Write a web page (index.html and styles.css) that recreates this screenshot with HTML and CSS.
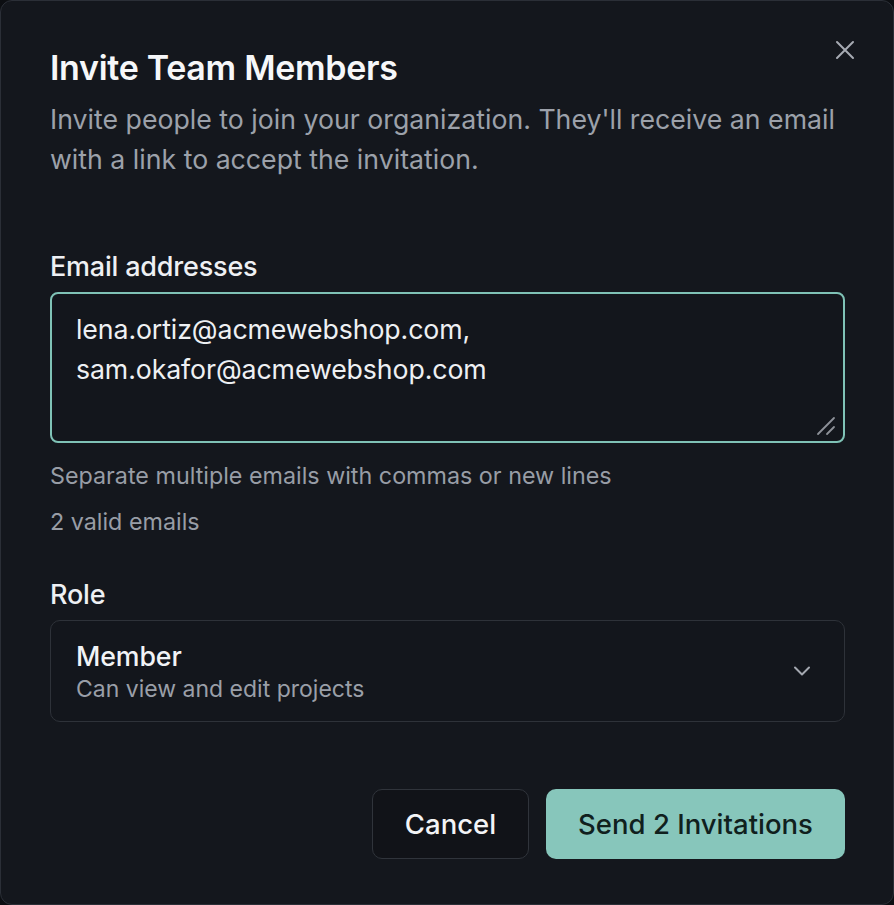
FILE: index.html
```html
<!DOCTYPE html>
<html lang="en">
<head>
<meta charset="utf-8">
<title>Invite Team Members</title>
<link rel="stylesheet" href="styles.css">
</head>
<body>
<div class="dialog" role="dialog" aria-labelledby="dlg-title">
  <button class="close" aria-label="Close">
    <svg width="20" height="20" viewBox="0 0 20 20" fill="none" stroke="currentColor" stroke-width="2" stroke-linecap="round"><path d="M2 2L18 18M18 2L2 18"/></svg>
  </button>
  <header class="head">
    <h2 id="dlg-title" class="title">Invite Team Members</h2>
    <p class="subtitle">Invite people to join your organization. They'll receive an email with a link to accept the invitation.</p>
  </header>

  <div class="field emails">
    <label class="label" for="emails">Email addresses</label>
    <div class="textarea-wrap">
      <textarea id="emails" class="textarea">lena.ortiz@acmewebshop.com,
sam.okafor@acmewebshop.com</textarea>
      <svg class="grip" width="20" height="20" viewBox="0 0 20 20" fill="none" stroke="currentColor" stroke-width="1.8" stroke-linecap="round"><path d="M2 18L18 2M11 18L18 11"/></svg>
    </div>
    <p class="hint first">Separate multiple emails with commas or new lines</p>
    <p class="hint count">2 valid emails</p>
  </div>

  <div class="field role">
    <span class="label">Role</span>
    <div class="select">
      <div class="select-text">
        <span class="select-value">Member</span>
        <span class="select-desc">Can view and edit projects</span>
      </div>
      <svg class="chevron" width="18" height="18" viewBox="0 0 18 18" fill="none" stroke="currentColor" stroke-width="2" stroke-linecap="round" stroke-linejoin="round"><path d="M2 5.5L9 12.5L16 5.5"/></svg>
    </div>
  </div>

  <footer class="actions">
    <button class="btn btn-secondary">Cancel</button>
    <button class="btn btn-primary">Send 2 Invitations</button>
  </footer>
</div>
</body>
</html>
```
FILE: styles.css
```css
* { box-sizing: border-box; }
html, body { margin: 0; padding: 0; }
body {
  background: #0c0e12;
  font-family: Inter, "Noto Sans", sans-serif;
  color: #f1f3f6;
  width: 894px;
  height: 905px;
}
.dialog {
  position: relative;
  width: 894px;
  height: 905px;
  background: #14171d;
  border: 1px solid #2b2f37;
  border-radius: 12px;
  padding: 47px 48px 0 49px;
  display: flex;
  flex-direction: column;
}
.close {
  position: absolute;
  top: 39px;
  right: 38px;
  width: 20px;
  height: 20px;
  padding: 0;
  border: 0;
  background: transparent;
  color: #a7abb3;
  cursor: pointer;
}
.close svg { display: block; }
.title {
  margin: 0;
  font-size: 34px;
  line-height: 40px;
  font-weight: 600;
  letter-spacing: -0.3px;
  color: #f6f7f9;
}
.subtitle {
  margin: 11px 0 0;
  font-size: 26.7px;
  line-height: 40px;
  color: #9ca1aa;
}
.field { display: flex; flex-direction: column; }
.emails { margin-top: 72px; }
.label {
  font-size: 27px;
  line-height: 32px;
  font-weight: 500;
  color: #eef0f3;
  margin-bottom: 9px;
  letter-spacing: -0.2px;
}
.textarea-wrap { position: relative; }
.textarea {
  display: block;
  width: 100%;
  height: 151px;
  margin: 0;
  padding: 15px 24px;
  background: #13161c;
  color: #eef0f3;
  border: 2px solid #7fc2b6;
  border-radius: 8px;
  font-family: inherit;
  font-size: 26.7px;
  line-height: 40px;
  letter-spacing: -0.1px;
  resize: none;
  outline: none;
  color-scheme: dark;
}
.grip {
  position: absolute;
  right: 9px;
  bottom: 7px;
  color: #8d9198;
  pointer-events: none;
}
.hint {
  margin: 0;
  font-size: 23.3px;
  line-height: 28px;
  color: #989da6;
}
.hint.first { margin-top: 19px; }
.hint.count { margin-top: 18px; }
.role { margin-top: 43px; }
.select {
  display: flex;
  align-items: center;
  justify-content: space-between;
  height: 102px;
  padding: 0 33px 0 25px;
  border: 1px solid #2e3239;
  border-radius: 10px;
  background: #13161c;
}
.select-text { display: flex; flex-direction: column; margin-top: 2px; }
.select-value {
  font-size: 26.7px;
  line-height: 32px;
  font-weight: 500;
  color: #f1f3f6;
  letter-spacing: -0.1px;
}
.select-desc {
  margin-top: 1px;
  font-size: 23px;
  line-height: 32px;
  color: #9a9fa8;
}
.chevron { color: #a4a8b0; }
.actions {
  margin-top: 67px;
  display: flex;
  justify-content: flex-end;
  gap: 17px;
}
.btn {
  height: 70px;
  padding: 0;
  border-radius: 10px;
  font-family: inherit;
  font-size: 27.5px;
  font-weight: 500;
  cursor: pointer;
}
.btn-secondary {
  width: 157px;
  background: #111318;
  color: #f3f4f6;
  border: 1px solid #30343b;
}
.btn-primary {
  width: 299px;
  background: #87c6bb;
  color: #10201d;
  border: 0;
}
```
